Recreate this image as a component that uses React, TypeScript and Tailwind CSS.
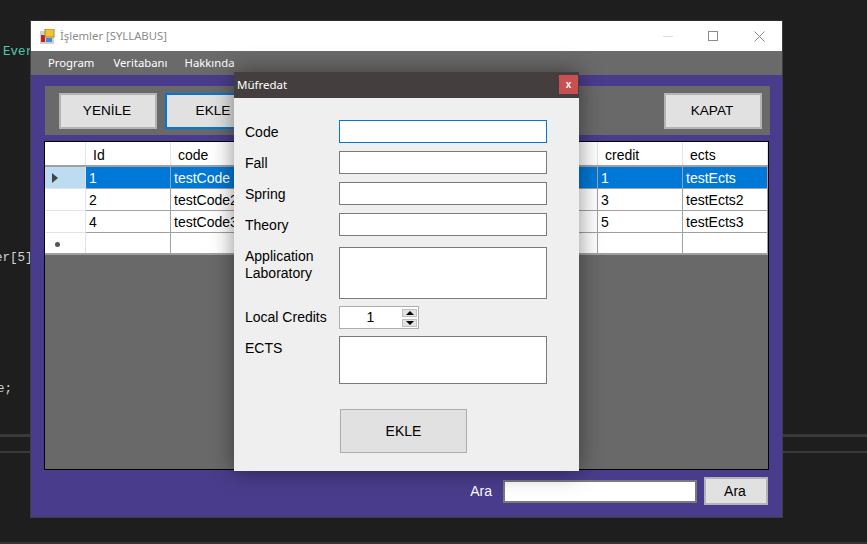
const arial = "font-['Liberation_Sans',Arial,sans-serif]";

const colWidths = [41, 85, 85, 85, 85, 86, 86, 85, 85];

const rows = [
  { id: "1", code: "testCode", credit: "1", ects: "testEcts", selected: true },
  { id: "2", code: "testCode2", credit: "3", ects: "testEcts2" },
  { id: "4", code: "testCode3", credit: "5", ects: "testEcts3" },
];

function ToolButton({ label, className = "" }: { label: string; className?: string }) {
  return (
    <button className={`h-[36px] w-[98px] bg-[#e1e1e1] text-[13.6px] text-black border-2 pr-[2px] pt-[1px] ${className}`}>
      {label}
    </button>
  );
}

function Cell({ width, children, className = "" }: { width: number; children?: React.ReactNode; className?: string }) {
  return (
    <div style={{ width }} className={`shrink-0 h-full border-r border-b border-[#a0a0a0] flex items-center overflow-hidden whitespace-nowrap ${className}`}>
      {children}
    </div>
  );
}

function Grid() {
  return (
    <div className={`h-[329px] mt-[6px] -ml-px mr-px border border-black bg-[#696969] text-[14px] ${arial}`}>
      <div className="flex h-[25px] bg-white border-b-2 border-[#a0a0a0]">
        {colWidths.map((w, i) => (
          <div key={i} style={{ width: w }} className="shrink-0 h-full border-r border-[#e4e4e4] flex items-center pl-[7px] pt-[3px] text-black">
            {i === 1 ? "Id" : i === 2 ? "code" : i === 7 ? "credit" : i === 8 ? "ects" : ""}
          </div>
        ))}
      </div>
      {rows.map((r) => (
        <div key={r.id} className={`flex h-[22px] ${r.selected ? "bg-[#0078d7] text-white" : "bg-white text-black"}`}>
          {colWidths.map((w, i) => (
            <Cell
              key={i}
              width={w}
              className={i === 0 ? `pl-[7px] border-[#e4e4e4] ${r.selected ? "bg-[#bddcf2]" : "bg-white"}` : "pl-[3px] pt-[1px]"}
            >
              {i === 0 && r.selected && (
                <svg width="6" height="10" viewBox="0 0 6 10">
                  <path d="M0 0 L6 5 L0 10 Z" fill="#444444" />
                </svg>
              )}
              {i === 1 ? r.id : i === 2 ? r.code : i === 7 ? r.credit : i === 8 ? r.ects : ""}
            </Cell>
          ))}
        </div>
      ))}
      <div className="flex h-[22px] bg-white border-b-2 border-[#a0a0a0]">
        {colWidths.map((w, i) => (
          <div key={i} style={{ width: w }} className={`shrink-0 h-full border-r flex items-center ${i === 0 ? "border-[#e4e4e4]" : "border-[#a0a0a0]"}`}>
            {i === 0 && <span className="ml-[10px] mt-[2px] block size-[5px] rounded-full bg-[#555555]" />}
          </div>
        ))}
      </div>
    </div>
  );
}

function AppIcon() {
  return (
    <svg width="15" height="15" viewBox="0 0 15 15" className="shrink-0">
      <rect x="0" y="2" width="14" height="13" fill="#cfcfcf" />
      <rect x="1" y="6" width="4" height="7" fill="#b5271f" />
      <rect x="5" y="0" width="9" height="8" fill="#f2c23a" stroke="#b08a1a" />
      <rect x="6" y="9" width="6" height="4" fill="#4a86d8" />
    </svg>
  );
}

function MainWindow() {
  return (
    <div className="absolute left-[30px] top-[20px] w-[753px] h-[498px] border border-[#3f3f3f] border-t-[#2d2d2d] bg-[#4a3c8c] flex flex-col">
      <div className="h-[30px] bg-white flex items-center pl-[9px] font-['Noto_Sans',sans-serif] text-[11.3px] text-[#8c8c8c]">
        <AppIcon />
        <span className="ml-[5px]">İşlemler [SYLLABUS]</span>
        <div className="ml-auto flex items-center pr-[17px]">
          <span className="block w-[10px] h-px bg-[#dcdcdc] mr-[35px]" />
          <span className="block size-[10px] border border-[#8c8c8c] mr-[36px]" />
          <svg width="11" height="11" viewBox="0 0 11 11">
            <path d="M0.5 0.5 L10.5 10.5 M10.5 0.5 L0.5 10.5" stroke="#8c8c8c" strokeWidth="1" />
          </svg>
        </div>
      </div>
      <div className="h-[24px] bg-[#6a6a6a] flex items-center pl-[17px] gap-[19px] font-['Noto_Sans',sans-serif] text-[11.3px] text-white">
        <span>Program</span>
        <span>Veritabanı</span>
        <span className="-ml-[2px]">Hakkında</span>
      </div>
      <div className="flex-1 pt-[11px] pl-[14px] pr-[12px] flex flex-col">
        <div className={`h-[49px] bg-[#696969] flex items-center pl-[14px] pr-[8px] gap-[8px] ${arial}`}>
          <ToolButton label="YENİLE" className="border-[#b4b4b4]" />
          <ToolButton label="EKLE" className="border-[#0078d7]" />
          <ToolButton label="KAPAT" className="ml-auto border-[#b4b4b4]" />
        </div>
        <Grid />
        <div className={`flex items-center mt-[7px] ${arial} text-[14px]`}>
          <span className="ml-auto text-white mr-[11px]">Ara</span>
          <div className="w-[194px] h-[23px] bg-white border-2 border-[#7a7a7a] mr-[7px]" />
          <button className="w-[64px] h-[28px] bg-[#e1e1e1] border-2 border-[#b4b4b4] text-black mr-[2px] pr-[2px]">Ara</button>
        </div>
      </div>
    </div>
  );
}

function Field({ active, className = "h-[23px]" }: { active?: boolean; className?: string }) {
  return <div className={`w-[208px] bg-white border ${active ? "border-[#0078d7]" : "border-[#7a7a7a]"} ${className}`} />;
}

function Dialog() {
  return (
    <div className={`absolute left-[234px] top-[72px] w-[345px] h-[399px] bg-[#efefef] shadow-[0_0_22px_rgba(0,0,0,0.45)] ${arial} text-[14px] text-black`}>
      <div className="h-[26px] bg-[#443f3e] flex items-center pl-[3px] pr-px font-['Noto_Sans',sans-serif] text-[11.5px] text-white">
        <span>Müfredat</span>
        <span className={`ml-auto mb-[1px] w-[19px] h-[19px] bg-[#c75050] flex items-center justify-center text-[10px] font-bold leading-none ${arial}`}>x</span>
      </div>
      <div className="pt-[22px] pl-[11px] grid grid-cols-[94px_208px] gap-y-[8px] items-center">
        <span className="pt-[2px]">Code</span>
        <Field active />
        <span className="pt-[2px]">Fall</span>
        <Field />
        <span className="pt-[2px]">Spring</span>
        <Field />
        <span className="pt-[2px]">Theory</span>
        <Field />
        <span className="self-start leading-[17px] mt-[3px] pt-[1px]">Application<br />Laboratory</span>
        <Field className="h-[52px] mt-[3px]" />
        <span className="-mt-px">Local Credits</span>
        <div className="w-[80px] h-[23px] -mt-px bg-white border border-[#adadad] flex items-center">
          <span className="w-[61px] text-center pb-[1px]">1</span>
          <div className="ml-auto mr-[1px] w-[15px] flex flex-col gap-[2px]">
            <span className="h-[8px] bg-[#e1e1e1] border border-[#c0c0c0] flex items-center justify-center">
              <span className="border-x-[4px] border-x-transparent border-b-[4px] border-b-black" />
            </span>
            <span className="h-[8px] bg-[#e1e1e1] border border-[#c0c0c0] flex items-center justify-center">
              <span className="border-x-[4px] border-x-transparent border-t-[4px] border-t-black" />
            </span>
          </div>
        </div>
        <span className="self-start -mt-px pt-[2px]">ECTS</span>
        <Field className="h-[48px] -mt-px" />
      </div>
      <button className="block ml-[106px] mt-[25px] w-[127px] h-[44px] bg-[#e1e1e1] border border-[#adadad]">EKLE</button>
    </div>
  );
}

export default function App() {
  return (
    <div className="relative w-[867px] h-[544px] overflow-hidden bg-[#1e1e1e] font-['Liberation_Mono',monospace] text-[12.5px]">
      <span className="absolute left-[3px] top-[43px] text-[#4ec9b0]">Ever</span>
      <span className="absolute -left-[5px] top-[249px] text-[#d4d4d4]">er[5]</span>
      <span className="absolute -left-[3px] top-[380px] text-[#d4d4d4]">e;</span>
      <div className="absolute inset-x-0 top-[434px] h-[3px] bg-[#3a3a3a]" />
      <div className="absolute inset-x-0 top-[451px] h-[2px] bg-[#3a3a3a]" />
      <div className="absolute inset-x-0 bottom-0 h-[2px] bg-[#333333]" />
      <MainWindow />
      <Dialog />
    </div>
  );
}
